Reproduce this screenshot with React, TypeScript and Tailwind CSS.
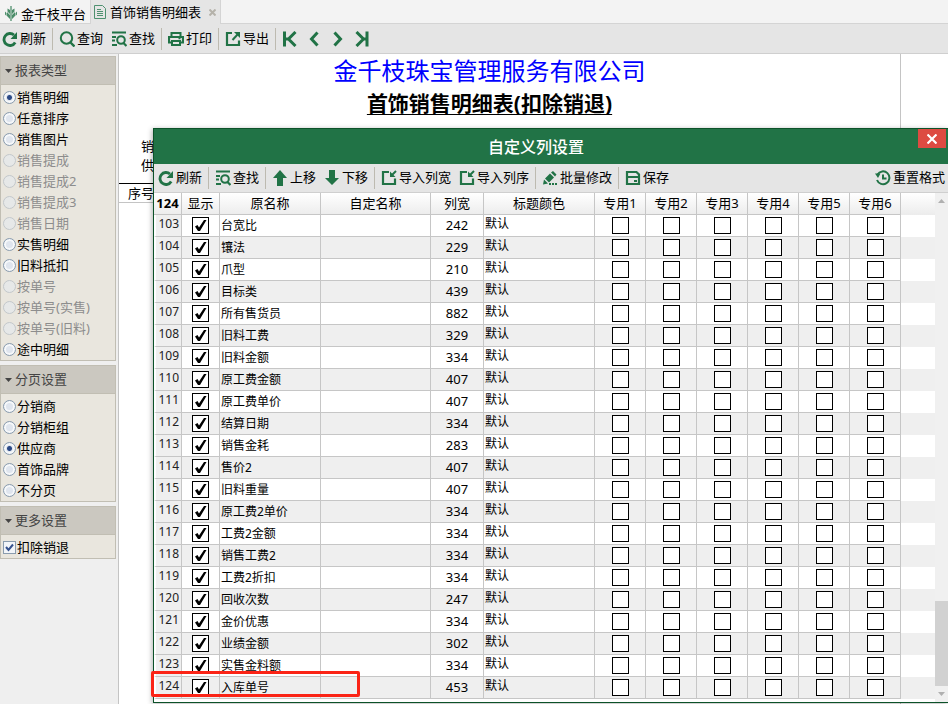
import type { ReactNode } from "react"

const rows: [number, string, number][] = [
    [103, "台宽比", 242],
    [104, "镶法", 229],
    [105, "爪型", 210],
    [106, "目标类", 439],
    [107, "所有售货员", 882],
    [108, "旧料工费", 329],
    [109, "旧料金额", 334],
    [110, "原工费金额", 407],
    [111, "原工费单价", 407],
    [112, "结算日期", 334],
    [113, "销售金耗", 283],
    [114, "售价2", 407],
    [115, "旧料重量", 407],
    [116, "原工费2单价", 334],
    [117, "工费2金额", 334],
    [118, "销售工费2", 334],
    [119, "工费2折扣", 334],
    [120, "回收次数", 247],
    [121, "金价优惠", 334],
    [122, "业绩金额", 302],
    [123, "实售金料额", 334],
    [124, "入库单号", 453],
]

const reportTypes = [
    { label: "销售明细" },
    { label: "任意排序" },
    { label: "销售图片" },
    { label: "销售提成", disabled: true },
    { label: "销售提成2", disabled: true },
    { label: "销售提成3", disabled: true },
    { label: "销售日期", disabled: true },
    { label: "实售明细" },
    { label: "旧料抵扣" },
    { label: "按单号", disabled: true },
    { label: "按单号(实售)", disabled: true },
    { label: "按单号(旧料)", disabled: true },
    { label: "途中明细" },
]

const pageTypes = [
    { label: "分销商" },
    { label: "分销柜组" },
    { label: "供应商" },
    { label: "首饰品牌" },
    { label: "不分页" },
]

const specials = [1, 2, 3, 4, 5, 6]

function Icon({ children }: { children: ReactNode }) {
    return (
        <svg viewBox="0 0 16 16" className="size-4 shrink-0" fill="none" stroke="#217346" strokeWidth="2" aria-hidden="true">
            {children}
        </svg>
    )
}

function RefreshIcon() {
    return (
        <Icon>
            <path d="M13.2 11.5A6 6 0 1 1 12 4" strokeWidth="2.8" />
            <path d="M15 1v7H8.5z" fill="#217346" stroke="none" />
        </Icon>
    )
}

function SearchIcon() {
    return (
        <Icon>
            <circle cx="7.5" cy="7" r="5.7" />
            <path d="M11 11l4.5 4.5" strokeWidth="2.4" />
        </Icon>
    )
}

function FindIcon() {
    return (
        <Icon>
            <path d="M1 1.500h14M1 6h4M1 9.500h3M1 14h5" strokeWidth="1.8" />
            <circle cx="10" cy="9" r="3.8" />
            <path d="M12.500 12l3 3" strokeWidth="2.2" />
        </Icon>
    )
}

function PrintIcon() {
    return (
        <Icon>
            <path d="M3.5 5V2h9v3" />
            <path d="M3 11.500H1V6h14v5.500h-2" strokeWidth="2.2" />
            <path d="M4 10h8v4H4z" />
            <path d="M10.500 7.500h2" strokeWidth="1.5" />
        </Icon>
    )
}

function ExportIcon() {
    return (
        <Icon>
            <path d="M7 2H2v12h12V9.5" strokeWidth="2.2" />
            <path d="M7.5 9l5.500-6" />
            <path d="M9 1h6v6z" fill="#217346" stroke="none" />
        </Icon>
    )
}

function ImportIcon() {
    return (
        <Icon>
            <path d="M8 2H2v12h12V8.500" strokeWidth="2.2" />
            <path d="M15 1l-4 4" />
            <path d="M9 1.500v5.500h5.500z" fill="#217346" stroke="none" />
        </Icon>
    )
}

function UpIcon() {
    return (
        <Icon>
            <path d="M8 0l7 8h-4v8H5V8H1z" fill="#217346" stroke="none" />
        </Icon>
    )
}

function DownIcon() {
    return (
        <Icon>
            <path d="M8 15l7-7h-4V0H5v8H1z" fill="#217346" stroke="none" />
        </Icon>
    )
}

function EditIcon() {
    return (
        <Icon>
            <path d="M1 14.500l1-5 4 4zM3 8.500L8 3.500l4 4-5 5zM9 2.500L11 1l3.500 3.500L13 6.500z" fill="#217346" stroke="none" />
            <path d="M7 14h9" strokeDasharray="2 1" />
        </Icon>
    )
}

function SaveIcon() {
    return (
        <Icon>
            <path d="M2 2h9.500L14 4.500V14H2z" strokeWidth="2.2" />
            <path d="M2 7h12M9 11h3" />
        </Icon>
    )
}

function HistoryIcon() {
    return (
        <Icon>
            <path d="M2.500 4.500A6.400 6.400 0 1 1 2 10" />
            <path d="M0 3.500h5.500L3 8z" fill="#217346" stroke="none" />
            <path d="M8 4.500v4h3.500" />
        </Icon>
    )
}

function ToolButton({ icon, label }: { icon: ReactNode; label: string }) {
    return (
        <button type="button" className="flex items-center gap-0.5 whitespace-nowrap">
            {icon}
            <span className="pb-0.5">{label}</span>
        </button>
    )
}

function Divider() {
    return <span className="h-[22px] w-px shrink-0 bg-[#bdbab0]" />
}

function Panel({ title, children }: { title: string; children: ReactNode }) {
    return (
        <section className="border border-[#c1beb3] bg-[#e9e6de]">
            <h2 className="flex h-7 items-center gap-[3px] border-b border-[#c1beb3] bg-[#cbc8c0] pl-1 text-[#444]">
                <svg viewBox="0 0 7 4" className="h-1 w-[7px]" fill="#444" aria-hidden="true">
                    <path d="M0 0h7L3.500 4z" />
                </svg>
                <span className="pb-0.5">{title}</span>
            </h2>
            <div className="pt-0.5">{children}</div>
        </section>
    )
}

function RadioRow({ name, label, checked, disabled }: { name: string; label: string; checked?: boolean; disabled?: boolean }) {
    return (
        <label className={disabled ? "flex h-[21px] items-center gap-px pl-0.5 whitespace-nowrap text-[#8d8d8d]" : "flex h-[21px] items-center gap-px pl-0.5 whitespace-nowrap"}>
            <input
                type="radio"
                name={name}
                defaultChecked={checked}
                disabled={disabled}
                className="size-[13px] shrink-0 appearance-none rounded-full border border-[#8a9cae] bg-[#dfe5ee] shadow-[inset_0_0_0_2px_#f6f8fa] checked:bg-[radial-gradient(circle,#2c4a86_0_2px,#dfe5ee_3px)] disabled:border-[#c3c8cb] disabled:bg-[#e6e8e8] disabled:shadow-none"
            />
            <span className="pb-0.5">{label}</span>
        </label>
    )
}

function TableCheck({ label, checked }: { label: string; checked?: boolean }) {
    return (
        <span className="mx-auto grid size-[17px] place-items-center">
            <input
                type="checkbox"
                aria-label={label}
                defaultChecked={checked}
                className="peer col-start-1 row-start-1 size-[17px] appearance-none border border-black bg-white"
            />
            <svg viewBox="0 0 13 13" className="pointer-events-none z-10 col-start-1 row-start-1 hidden size-[13px] peer-checked:block" aria-hidden="true">
                <path d="M1 7.500l2.500-1.500 1.500 2.500L10 1h2.500L6 12H4z" fill="#000" />
            </svg>
        </span>
    )
}

function ColumnTable() {
    const th = "border-r border-b border-[#c6c6c6] p-0 pb-0.5 font-normal"
    const td = "border-r border-b border-[#c6c6c6] p-0"
    return (
        <table className="w-full table-fixed border-separate border-spacing-0 text-[13px] leading-4">
            <colgroup>
                <col className="w-7" />
                <col className="w-[38px]" />
                <col className="w-[101px]" />
                <col className="w-[110px]" />
                <col className="w-[53px]" />
                <col className="w-[111px]" />
                {specials.map((n) => (
                    <col key={n} className="w-[51px]" />
                ))}
                <col />
            </colgroup>
            <thead>
                <tr className="h-[22px] bg-linear-to-b from-white to-[#ececec]">
                    <th className="border-r border-b border-[#c6c6c6] p-0 pb-0.5 font-bold">124</th>
                    <th className={th}>显示</th>
                    <th className={th}>原名称</th>
                    <th className={th}>自定名称</th>
                    <th className={th}>列宽</th>
                    <th className={th}>标题颜色</th>
                    {specials.map((n) => (
                        <th key={n} className={th}>专用{n}</th>
                    ))}
                    <th className="p-0" />
                </tr>
            </thead>
            <tbody>
                {rows.map(([id, name, width]) => (
                    <tr key={id} className="h-[22px] bg-white even:bg-[#efefef]">
                        <td className="border-r border-b border-l-2 border-[#c6c6c6] border-l-white bg-[#efefef] p-0 pr-0.5 pb-1 text-right text-xs leading-4 text-[#222]">{id}</td>
                        <td className={td}>
                            <TableCheck label={"显示 " + name} checked />
                        </td>
                        <td className="border-r border-b border-[#c6c6c6] p-0 pl-px text-xs leading-4 whitespace-nowrap">{name}</td>
                        <td className={td} />
                        <td className="border-r border-b border-[#c6c6c6] p-0 pb-0.5 text-center">{width}</td>
                        <td className="border-r border-b border-[#c6c6c6] p-0 pb-1 pl-px text-xs leading-4">默认</td>
                        {specials.map((n) => (
                            <td key={n} className={td}>
                                <TableCheck label={"专用" + n + " " + name} />
                            </td>
                        ))}
                        <td className="p-0" />
                    </tr>
                ))}
            </tbody>
        </table>
    )
}

function Dialog() {
    return (
        <section role="dialog" aria-label="自定义列设置" className="absolute top-[128px] right-0 left-[153px] border-y border-l border-[#0c5229] bg-white shadow-[-1px_1px_5px_rgba(0,0,0,0.3)]">
            <header className="grid h-[35px] grid-cols-[12px_1fr_42px] bg-[#217346]">
                <h2 className="col-start-2 self-center text-center text-base font-medium text-white">自定义列设置</h2>
                <button type="button" aria-label="关闭" className="mr-0.5 grid h-[19px] w-7 place-items-center justify-self-end bg-[#dd4b42]">
                    <svg viewBox="0 0 10 10" className="size-[10px]" stroke="#fff" strokeWidth="2.2" aria-hidden="true">
                        <path d="M0.500 0.500l9 9M9.500 0.500l-9 9" />
                    </svg>
                </button>
            </header>
            <div className="flex h-[29px] items-center gap-1.5 border-b border-[#cfcfcf] bg-[#e5e5e5] pl-1">
                <ToolButton icon={<RefreshIcon />} label="刷新" />
                <Divider />
                <ToolButton icon={<FindIcon />} label="查找" />
                <Divider />
                <div className="flex gap-2">
                    <ToolButton icon={<UpIcon />} label="上移" />
                    <ToolButton icon={<DownIcon />} label="下移" />
                </div>
                <Divider />
                <div className="flex gap-2">
                    <ToolButton icon={<ImportIcon />} label="导入列宽" />
                    <ToolButton icon={<ImportIcon />} label="导入列序" />
                </div>
                <Divider />
                <ToolButton icon={<EditIcon />} label="批量修改" />
                <Divider />
                <ToolButton icon={<SaveIcon />} label="保存" />
                <div className="mr-[3px] ml-auto">
                    <ToolButton icon={<HistoryIcon />} label="重置格式" />
                </div>
            </div>
            <div className="flex">
                <div className="min-w-0 flex-1 pb-[3px]">
                    <ColumnTable />
                </div>
                <div className="flex w-[13px] shrink-0 flex-col items-center bg-[#f0f0f0] py-1.5">
                    <svg viewBox="0 0 7 4" className="h-1 w-[7px]" fill="#b0b0b0" aria-hidden="true">
                        <path d="M0 4h7L3.500 0z" />
                    </svg>
                    <div className="mt-auto mb-1.5 h-[85px] w-full bg-[#d1d1d1]" />
                    <svg viewBox="0 0 7 4" className="h-1 w-[7px]" fill="#b0b0b0" aria-hidden="true">
                        <path d="M0 0h7L3.500 4z" />
                    </svg>
                </div>
            </div>
        </section>
    )
}

export default function App() {
    return (
        <div className="relative flex min-h-screen flex-col bg-white font-['Noto_Sans','Noto_Sans_CJK_SC',sans-serif] text-[13px] leading-5 text-black">
            <nav className="flex h-6 bg-[#f3f3f3]">
                <a href="#home" className="flex w-[91px] items-center gap-[3px] border-r border-b border-[#d4d4d4] pt-1 pl-1 whitespace-nowrap">
                    <svg viewBox="0 0 14 16" className="h-4 w-[14px] shrink-0" fill="#217346" aria-hidden="true">
                        <path d="M6.500 0h1v15h-1z" />
                        <path d="M6 4v4L3.500 5.500v-3zM8 4v4l2.500-2.500v-3zM6 9v4L3 10V6zM8 9v4l3-3V6zM2.500 10L1 8.500V5.500l1.500 1.500zM11.500 10L13 8.500V5.500L11.500 7z" opacity="0.8" />
                    </svg>
                    金千枝平台
                </a>
                <div className="flex w-[129px] items-center gap-1 bg-[#e5e5e5] pl-[3px]">
                    <svg viewBox="0 0 12 14" className="h-[14px] w-3 shrink-0" fill="none" stroke="#4f9170" aria-hidden="true">
                        <path d="M0.500 0.500h8l3 3v10H0.500z" />
                        <path d="M3 4.500h4M3 6.500h6M3 8.500h6M3 10.500h6" />
                    </svg>
                    <a href="#report" className="whitespace-nowrap">首饰销售明细表</a>
                    <button type="button" aria-label="关闭标签" className="ml-1">
                        <svg viewBox="0 0 7 7" className="size-[7px]" stroke="#b5b2aa" strokeWidth="2" aria-hidden="true">
                            <path d="M0.500 0.500l6 6M6.500 0.500l-6 6" />
                        </svg>
                    </button>
                </div>
                <div className="flex-1 border-b border-l border-[#d4d4d4]" />
            </nav>
            <div className="flex h-[30px] items-center gap-1.5 border-b border-[#cfcfcf] bg-[#e5e5e5] pl-0.5">
                <ToolButton icon={<RefreshIcon />} label="刷新" />
                <Divider />
                <div className="flex gap-2">
                    <ToolButton icon={<SearchIcon />} label="查询" />
                    <ToolButton icon={<FindIcon />} label="查找" />
                </div>
                <Divider />
                <ToolButton icon={<PrintIcon />} label="打印" />
                <Divider />
                <ToolButton icon={<ExportIcon />} label="导出" />
                <Divider />
                <div className="flex gap-2">
                    <button type="button" aria-label="首页">
                        <Icon><path d="M2.500 0.500v15M13.500 1L6.500 8l7 7M3 8h4" strokeWidth="3" /></Icon>
                    </button>
                    <button type="button" aria-label="上一页">
                        <Icon><path d="M11.500 1.500L5.500 8l6 6.500" strokeWidth="3" /></Icon>
                    </button>
                    <button type="button" aria-label="下一页">
                        <Icon><path d="M4.500 1.500L10.500 8l-6 6.500" strokeWidth="3" /></Icon>
                    </button>
                    <button type="button" aria-label="末页">
                        <Icon><path d="M13 0.500v15M2.500 1L9.500 8l-7 7M13 8H9" strokeWidth="3" /></Icon>
                    </button>
                </div>
            </div>
            <div className="flex flex-1">
                <aside className="w-[119px] shrink-0 border-r border-[#c4c4c4] bg-[#efefef] pt-0.5 pr-0.5">
                    <div className="flex flex-col gap-1">
                        <Panel title="报表类型">
                            {reportTypes.map((item, i) => (
                                <RadioRow key={item.label} name="report" label={item.label} disabled={item.disabled} checked={i === 0} />
                            ))}
                        </Panel>
                        <Panel title="分页设置">
                            {pageTypes.map((item, i) => (
                                <RadioRow key={item.label} name="page" label={item.label} checked={i === 2} />
                            ))}
                        </Panel>
                        <Panel title="更多设置">
                            <label className="flex h-[21px] items-center gap-px pl-0.5">
                                <span className="grid place-items-center">
                                    <input type="checkbox" defaultChecked className="peer col-start-1 row-start-1 size-[13px] appearance-none border border-[#8a9cae] bg-[#f2f5f9]" />
                                    <svg viewBox="0 0 9 9" className="pointer-events-none z-10 col-start-1 row-start-1 hidden size-[9px] peer-checked:block" fill="none" stroke="#35528f" strokeWidth="2" aria-hidden="true">
                                        <path d="M1 4l2.500 3L8 1.500" />
                                    </svg>
                                </span>
                                <span className="pb-0.5">扣除销退</span>
                            </label>
                        </Panel>
                    </div>
                </aside>
                <main className="flex min-w-0 flex-1">
                    <div className="flex-1 border-r border-[#c4c4c4]">
                        <div className="flex flex-col items-center pt-px pr-10">
                            <h1 className="text-2xl leading-8 text-[#0000ff]">金千枝珠宝管理服务有限公司</h1>
                            <h2 className="text-[21px] leading-8 font-bold underline decoration-1 underline-offset-3">首饰销售明细表(扣除销退)</h2>
                        </div>
                        <div className="pt-[18px] pl-[22px] leading-[19px]">
                            <p>销售日期</p>
                            <p>供应商</p>
                        </div>
                        <div className="mt-2 border-t border-b border-t-black border-b-[#c4c4c4] pl-[9px] leading-[18px]">序号</div>
                    </div>
                    <div className="w-[47px] shrink-0" />
                </main>
            </div>
            <Dialog />
            <div className="pointer-events-none absolute top-[671px] left-[151px] h-[26px] w-[209px] rounded-xs border-3 border-[#fb2416]" />
        </div>
    )
}
